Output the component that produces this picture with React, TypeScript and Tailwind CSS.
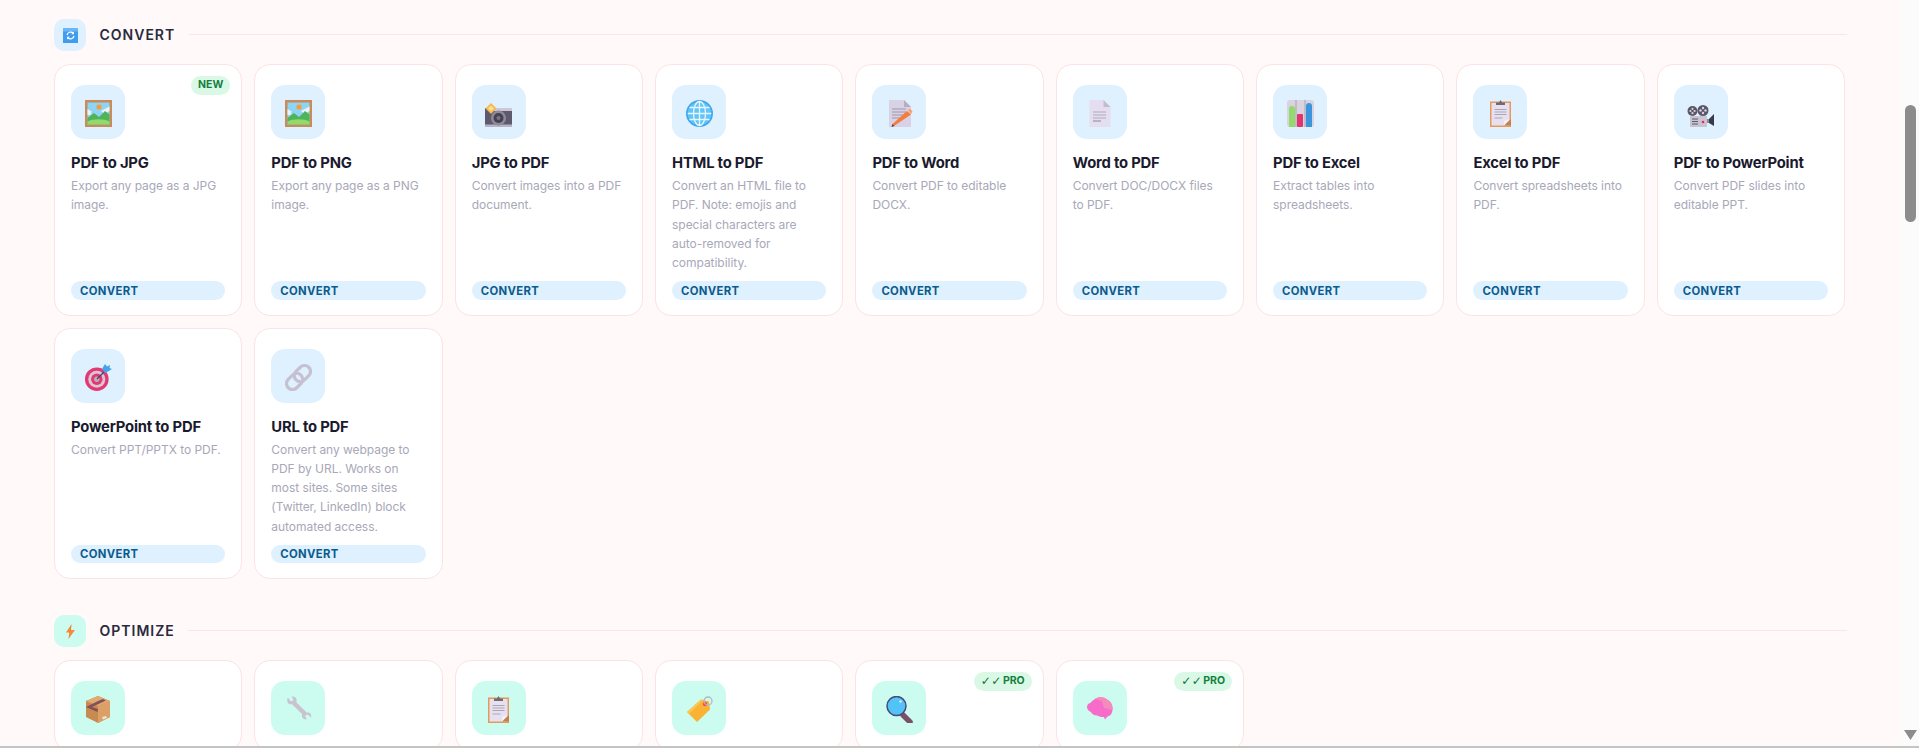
import React from "react";

const Svg = ({ children }: { children: React.ReactNode }) => (
  <svg width="27" height="27" viewBox="0 0 27 27" className="mt-[3px] block">{children}</svg>
);

const Picture = () => (
  <Svg>
    <rect x="0" y="0" width="27" height="27" fill="#c98b58" />
    <rect x="2.500" y="2.500" width="22" height="22" fill="#8ed5f5" />
    <circle cx="14" cy="7" r="2.600" fill="#f79a3a" />
    <path d="M2.500 9l4 2.500-1 3.500h-3z" fill="#eef3f8" />
    <path d="M16 11l8.500-4.500V11l-5 3z" fill="#eef3f8" />
    <path d="M2.500 18l6.500-5 5 4 6-6 4.500 3.500V24.500h-22z" fill="#4fb35a" />
    <path d="M2.500 24.500v-3c5-3 17-3 22 0v3z" fill="#93d96c" />
  </Svg>
);
const Camera = () => (
  <Svg>
    <rect x="0" y="8" width="27" height="19" rx="1" fill="#5e596c" />
    <rect x="8" y="8" width="19" height="3" fill="#cdc7d8" />
    <rect x="0" y="24.500" width="27" height="2.500" fill="#b9b3c6" />
    <circle cx="13.500" cy="18" r="7.500" fill="#8d8a99" />
    <circle cx="13.500" cy="18" r="5" fill="#45424f" />
    <circle cx="13.500" cy="18" r="2" fill="#77748a" />
    <path d="M6 3l5.500 5.500L6 14 .5 8.500z" fill="#f8b550" />
    <path d="M6 5.500l3 3-3 3-3-3z" fill="#fbe08e" />
  </Svg>
);
const Globe = () => (
  <Svg>
    <circle cx="13.500" cy="13.500" r="13.500" fill="#3fa7ef" />
    <circle cx="13.500" cy="13.500" r="11.800" fill="#62c5f7" />
    <g fill="none" stroke="#e8f6fe" strokeWidth="1.300">
      <ellipse cx="13.500" cy="13.500" rx="6" ry="12" />
      <path d="M13.500 1.500v24M1.800 13.500h23.400M3.500 7.500h20M3.500 19.500h20" />
    </g>
  </Svg>
);
const DocPencil = () => (
  <Svg>
    <path d="M3 0h15l7 7v20H3z" fill="#d9d2e6" />
    <path d="M18 0l7 7h-7z" fill="#b5afc2" />
    <path d="M6 9h14M6 12h14M6 15h11M6 18h8" stroke="#9b96a6" strokeWidth="1" />
    <path d="M8 26l-2.500 1 1-3L21 11l4 3.500z" fill="#f57c3a" />
    <path d="M22 10l2-1.500 2.500 3L25 14z" fill="#f9a06a" />
    <path d="M5.500 27l1-3 2 2z" fill="#5a4a50" />
  </Svg>
);
const Page = () => (
  <Svg>
    <path d="M3.500 0h14l7 7v20h-21z" fill="#e5ddf0" />
    <path d="M17.500 0l7 7h-7z" fill="#c4bdd0" />
    <path d="M7 12h13M7 15h13M7 18h13" stroke="#b0abb9" strokeWidth="1.200" />
    <path d="M7 21h8" stroke="#9a96a2" strokeWidth="1.200" />
  </Svg>
);
const Chart = () => (
  <Svg>
    <rect width="27" height="27" rx="3" fill="#d8d3df" />
    <path d="M9 0v27M18 0v27" stroke="#a8a4ae" strokeWidth="1" />
    <path d="M2 9a3 3 0 0 1 6 0v18H2z" fill="#92da6c" />
    <rect x="10" y="14" width="6" height="13" rx="1" fill="#e0356e" />
    <path d="M19 6a3 3 0 0 1 6 0v21h-6z" fill="#3a95dc" />
  </Svg>
);
const Clipboard = () => (
  <Svg>
    <rect x="3" y="1.500" width="21" height="25.500" fill="#e69a5a" />
    <rect x="4.500" y="3" width="18" height="22.500" fill="#e6e0f1" />
    <path d="M9 5V2.500h3L13.500 0 15 2.500h3V5z" fill="#6f6b73" />
    <path d="M7.500 9.500h12M7.500 12h12M7.500 14.500h12M7.500 18h8" stroke="#aba6b3" strokeWidth="1" />
    <path d="M17 25.500l7-6.500v6.500z" fill="#c77f47" />
    <path d="M17 25.500v-4.500l5.500-2z" fill="#f5f2fa" />
  </Svg>
);
const MovieCam = () => (
  <Svg>
    <circle cx="5.500" cy="11" r="5" fill="#5a5668" />
    <circle cx="16" cy="10.500" r="5.500" fill="#5a5668" />
    <g fill="#d8d3de">
      <circle cx="5.500" cy="8.800" r="1.100" /><circle cx="5.500" cy="13.200" r="1.100" />
      <circle cx="3.400" cy="11" r="1.100" /><circle cx="7.600" cy="11" r="1.100" />
      <circle cx="16" cy="8" r="1.200" /><circle cx="16" cy="13" r="1.200" />
      <circle cx="13.500" cy="10.500" r="1.200" /><circle cx="18.500" cy="10.500" r="1.200" />
    </g>
    <rect x="3" y="16" width="17" height="11" fill="#c9c4d1" />
    <path d="M20 19h2v4h-2z" fill="#8d8896" />
    <path d="M22 19l5-5v12l-5-3z" fill="#37384a" />
    <path d="M5 19h6M5 21.500h6M5 24h6" stroke="#5d5968" strokeWidth="1" />
    <circle cx="16" cy="22" r="1.300" fill="#ec2b55" />
  </Svg>
);
const Target = () => (
  <Svg>
    <circle cx="11.800" cy="15.200" r="11.800" fill="#e23a70" />
    <circle cx="11.800" cy="15.200" r="8.500" fill="#d9c7d8" />
    <circle cx="11.800" cy="15.200" r="5.700" fill="#e23a70" />
    <circle cx="11.800" cy="15.200" r="2.700" fill="#b9aebb" />
    <path d="M12 15L21 6" stroke="#3e4a6b" strokeWidth="1.300" />
    <path d="M17 5l3-5 2 2.500L25 1l-.5 3L27 5l-4 2.500-3 1.500z" fill="#45a3ea" />
  </Svg>
);
const Link = () => (
  <Svg>
    <g fill="none" stroke="#c6c1d1" strokeWidth="3.200" transform="rotate(-45 13.500 13.500)">
      <rect x="-1" y="7.500" width="18" height="12" rx="6" />
      <rect x="10" y="7.500" width="18" height="12" rx="6" />
    </g>
  </Svg>
);
const Box = () => (
  <Svg>
    <path d="M13 0l12 5v16l-12 6-12-6V5z" fill="#c98a50" />
    <path d="M13 10l12-5v16l-12 6z" fill="#dca066" />
    <path d="M13 0L1 5l12 5 12-5z" fill="#e0aa70" />
    <path d="M1 11l12-6 5-2 3 1.500L7 11l6 2-.5 3z" fill="#84505a" />
    <path d="M17 21l4-1 1 2-4 1.500z" fill="#efe3d2" />
  </Svg>
);
const Wrench = () => (
  <Svg>
    <path d="M3 1l3 4 3-1-2-4c4-.5 6 2.500 5 6l11 11c3-1 5 1 4.500 5l-3.500-3-3 1 2 4c-3.500.5-6-2-5-5.500L7 8C4 9 1 6 3 1z" fill="#c9c3d0" transform="translate(0 0.500) scale(0.950)" />
  </Svg>
);
const Tag = () => (
  <Svg>
    <path d="M15 3.500l8 2 1 8L11 26 1 16z" fill="#f9b233" />
    <path d="M1 16L15 3.500l2 .5L3 18z" fill="#fcc654" />
    <circle cx="19" cy="8" r="2.200" fill="#ec4f5a" />
    <circle cx="22" cy="5" r="4" fill="none" stroke="#b9b5c8" strokeWidth="1.300" />
  </Svg>
);
const Magnifier = () => (
  <Svg>
    <path d="M17 19l7 7" stroke="#7a5068" strokeWidth="5.500" strokeLinecap="round" />
    <circle cx="10.500" cy="10" r="9.500" fill="#52c3f7" stroke="#4a4a7a" strokeWidth="1.500" />
    <circle cx="14.500" cy="5.500" r="1.200" fill="#d7f1fc" />
  </Svg>
);
const Brain = () => (
  <Svg>
    <path d="M9 3c3-2.500 9-2.500 12 .5 4 1.500 6 6 5.500 10.500-.5 3.500-2 6-5 6.500l-2.500 3-1-2.500c-3 .5-5-1-7-1.500-3 0-5-1.500-6-3.500-2-.5-4-2.500-4-5 0-2.500 2-4 3.500-4C5 6 7 4 9 3z" fill="#f76cc9" />
    <path d="M9 3c3-2.500 9-2.500 12 .5 4 1.500 6 6 5.500 10.500L18 12l-2-7z" fill="#f58bbd" />
  </Svg>
);

const SyncIcon = () => (
  <svg width="15" height="15" viewBox="0 0 15 15" className="block">
    <rect width="15" height="15" rx="0.500" fill="#3f9cef" />
    <rect x="0" y="0" width="15" height="3.500" fill="#6ab7f5" />
    <g transform="translate(1.500 1.500) scale(0.800)">
      <path d="M3.200 7a4.300 4.300 0 0 1 7.500-2.300M11.800 8a4.300 4.300 0 0 1-7.500 2.300" fill="none" stroke="#fff" strokeWidth="1.600" />
      <path d="M11.800 2.500v3.500H8.300zM3.200 12.500V9h3.500z" fill="#fff" />
    </g>
  </svg>
);
const BoltIcon = () => (
  <svg width="9" height="15" viewBox="0 0 9 15" className="block">
    <path d="M5.500 0L0 8.500h3.500L2.500 15 9 6H5z" fill="#f98a3c" />
    <path d="M5.500 0L3.500 8.500 2.500 15 4.500 6z" fill="#f2662f" />
  </svg>
);

type Item = { title?: string; desc?: string; icon: React.ComponentType; badge?: "NEW" | "PRO" };

const convert: Item[] = [
  { title: "PDF to JPG", desc: "Export any page as a JPG image.", icon: Picture, badge: "NEW" },
  { title: "PDF to PNG", desc: "Export any page as a PNG image.", icon: Picture },
  { title: "JPG to PDF", desc: "Convert images into a PDF document.", icon: Camera },
  { title: "HTML to PDF", desc: "Convert an HTML file to PDF. Note: emojis and special characters are auto-removed for compatibility.", icon: Globe },
  { title: "PDF to Word", desc: "Convert PDF to editable DOCX.", icon: DocPencil },
  { title: "Word to PDF", desc: "Convert DOC/DOCX files to\u00a0PDF.", icon: Page },
  { title: "PDF to Excel", desc: "Extract tables into spreadsheets.", icon: Chart },
  { title: "Excel to PDF", desc: "Convert spreadsheets into PDF.", icon: Clipboard },
  { title: "PDF to PowerPoint", desc: "Convert PDF slides into editable PPT.", icon: MovieCam },
  { title: "PowerPoint to PDF", desc: "Convert PPT/PPTX to PDF.", icon: Target },
  { title: "URL to PDF", desc: "Convert any webpage to PDF by URL. Works on most sites. Some sites (Twitter, LinkedIn) block automated access.", icon: Link },
];

const optimize: Item[] = [
  { icon: Box },
  { icon: Wrench },
  { icon: Clipboard },
  { icon: Tag },
  { icon: Magnifier, badge: "PRO" },
  { icon: Brain, badge: "PRO" },
];

function Card({ item, tone }: { item: Item; tone: "blue" | "mint" }) {
  const Icon = item.icon;
  return (
    <div className="relative flex flex-col rounded-[16px] border border-[#fde3e3] bg-white px-4 pt-5 pb-[15px]">
      {item.badge && (
        <span className="absolute right-[11px] top-[11px] flex h-[18.5px] items-center rounded-full bg-[#d9f9e6] px-[7px] text-[10.5px] font-bold leading-none text-[#15803d]">
          {item.badge === "PRO" && (
            <span className="mr-[1px] text-[12px] font-normal tracking-[0.5px] text-[#15703d]" style={{ fontFamily: '"DejaVu Sans", sans-serif' }}>
              ✓✓
            </span>
          )}
          {item.badge}
        </span>
      )}
      <div
        className={
          "flex h-[54px] w-[54px] items-center justify-center rounded-[14px] " +
          (tone === "blue" ? "bg-[#dff0ff]" : "bg-[#ccfbef]")
        }
      >
        <Icon />
      </div>
      {item.title && (
        <>
          <h3 className="mt-[14px] text-[14.8px] font-bold leading-[20px] tracking-[-0.2px] text-[#1a1a2e]">
            {item.title}
          </h3>
          <p className="mt-[3px] h-[96px] text-[12px] font-normal leading-[19.25px] tracking-[-0.04px] text-[#a8a8b8]">{item.desc}</p>
          <div className="mt-[9px] flex h-[18.5px] items-center rounded-full bg-[#dff0fe] px-[9px] pt-[1.5px] text-[11.3px] font-bold tracking-[0.35px] text-[#0b5c8e]">
            CONVERT
          </div>
        </>
      )}
    </div>
  );
}

function Section({ title, tone, icon, items, className }: { title: string; tone: "blue" | "mint"; icon: React.ReactNode; items: Item[]; className?: string }) {
  return (
    <section className={className}>
      <div className="mb-[13px] flex h-8 items-center gap-[13.5px]">
        <div
          className={
            "flex h-8 w-8 items-center justify-center rounded-[10px] pt-[1px] " +
            (tone === "blue" ? "bg-[#dff0ff]" : "bg-[#ccfbef]")
          }
        >
          {icon}
        </div>
        <h2 className="pb-[2px] text-[14px] font-semibold tracking-[1px] text-[#2a2a3e]">{title}</h2>
        <div className="mb-[2px] h-px flex-1 bg-[#fde5e5]" />
      </div>
      <div className="grid grid-cols-[repeat(9,188.35px)] gap-3">
        {items.map((it, i) => (
          <Card key={i} item={it} tone={tone} />
        ))}
      </div>
    </section>
  );
}

export default function App() {
  return (
    <div
      className="flex h-[748px] w-full overflow-hidden border-b-2 border-[#c4c4c4] bg-[#fff9f9]"
      style={{ fontFamily: '"Inter", "DejaVu Sans", sans-serif' }}
    >
      <main className="min-w-0 flex-1 px-[54px] pt-[19px]">
        <Section title="CONVERT" tone="blue" icon={<SyncIcon />} items={convert} />
        <Section title="OPTIMIZE" tone="mint" icon={<BoltIcon />} items={optimize} className="mt-[36px]" />
      </main>
      <aside className="flex w-[18px] shrink-0 flex-col items-center bg-[#fcfbfb] pb-[6px]">
        <div className="ml-[1px] mt-[105px] h-[117px] w-[11px] rounded-full bg-[#8c8c8c]" />
        <svg width="13" height="10" viewBox="0 0 13 10" className="ml-[1px] mt-auto block">
          <path d="M0 0h13L6.500 10z" fill="#8c8c8c" />
        </svg>
      </aside>
    </div>
  );
}
